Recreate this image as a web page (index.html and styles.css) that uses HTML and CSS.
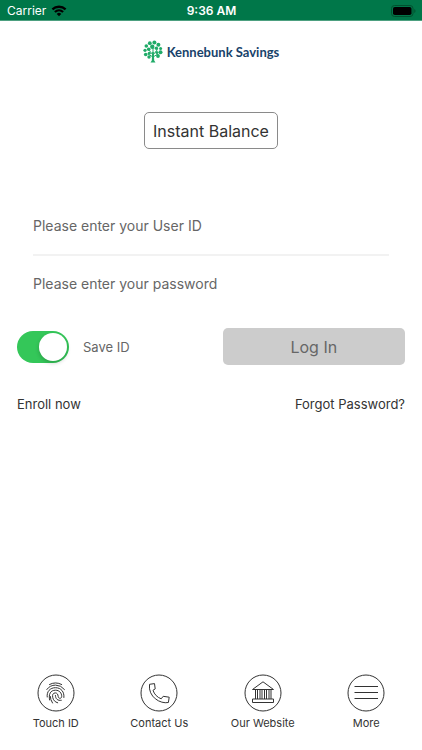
FILE: index.html
```html
<!DOCTYPE html>
<html lang="en">
<head>
<meta charset="utf-8">
<meta name="viewport" content="width=device-width, initial-scale=1">
<title>Kennebunk Savings</title>
<link rel="stylesheet" href="styles.css">
</head>
<body>
<header class="status">
  <div class="carrier">
    <span>Carrier</span>
    <svg class="wifi" viewBox="0 0 16 12" aria-hidden="true">
      <path d="M1.4 4.4a9.600 9.600 0 0 1 13.200 0M3.900 7a6 6 0 0 1 8.200 0" fill="none" stroke="#000" stroke-width="2.3"/>
      <path d="M5.700 8.900a3.400 3.400 0 0 1 4.600 0L8 11.300z"/>
    </svg>
  </div>
  <time class="clock">9:36 AM</time>
  <svg class="battery" viewBox="0 0 25 12" aria-hidden="true">
    <rect x=".5" y=".5" width="21.5" height="11" rx="3" fill="none" stroke="#00522f"/>
    <rect x="2" y="2" width="18.5" height="8" rx="1.8"/>
    <path d="M23.300 4v4q1.200-.6 1.200-2t-1.200-2z" fill="#00522f"/>
  </svg>
</header>

<main class="page">
  <h1 class="brand">
    <svg class="tree" viewBox="0 0 20 24" aria-hidden="true">
      <g fill="none" stroke="#20ab68" stroke-width="1">
        <path d="M10 16V7M10 15L5.500 9.500M10 15l4.500-5.500M10 17l-5-3M10 17l5-3"/>
      </g>
      <path d="M9.200 12h1.600l.4 8.500 1.300 2H7.500l1.300-2z" fill="#20ab68"/>
      <g fill="#20ab68">
        <circle cx="6.800" cy="3.200" r="1.900"/><circle cx="11.400" cy="2.500" r="2"/>
        <circle cx="15.400" cy="4.800" r="2"/><circle cx="3.300" cy="6" r="1.800"/>
        <circle cx="9.300" cy="6.700" r="2.200"/><circle cx="13.400" cy="8.300" r="1.700"/>
        <circle cx="17.600" cy="8.500" r="1.500"/><circle cx="5.700" cy="9.200" r="1.800"/>
        <circle cx="2" cy="10.300" r="1.600"/><circle cx="17.500" cy="12.300" r="2"/>
        <circle cx="13.900" cy="12.400" r="1.500"/><circle cx="2.700" cy="14.500" r="1.800"/>
        <circle cx="6.200" cy="13.200" r="1.500"/><circle cx="15" cy="16" r="1.900"/>
        <circle cx="6" cy="17" r="1.700"/>
      </g>
    </svg>
    <span>Kennebunk Savings</span>
  </h1>

  <button class="balance" type="button">Instant Balance</button>

  <form class="login">
    <div class="fields">
      <input class="field" type="text" placeholder="Please enter your User ID" aria-label="User ID">
      <input class="field" type="password" placeholder="Please enter your password" aria-label="Password">
    </div>
    <div class="row">
      <label class="save"><input class="switch" type="checkbox" role="switch" checked>Save ID</label>
      <button class="submit" type="submit" disabled>Log In</button>
    </div>
    <div class="row links">
      <a href="#enroll">Enroll now</a>
      <a href="#forgot">Forgot Password?</a>
    </div>
  </form>
</main>

<nav class="tabs">
  <a class="tab" href="#touch">
    <svg class="icon" viewBox="0 0 38 38" aria-hidden="true">
      <circle cx="19" cy="19" r="18"/>
      <g class="ridges">
        <path d="M12.500 10.500Q18.500 7.200 24.700 10.500"/>
        <path d="M9.800 15.500Q13 11.100 18.500 11.100T27.500 15.500"/>
        <path d="M10.200 23C9.400 17.500 13.200 13.700 18.500 13.700c5.600 0 9 4.200 8.400 9.800"/>
        <path d="M12.600 26C11.400 20 13.500 16.200 18.500 16.200c4 0 6.300 3 6.200 6.300-.1 2.400-3.300 2.400-3.500 0-.2-2.200-1.200-3.600-2.900-3.600-2.300 0-3.100 2-2.600 4.400.6 3 2.200 4.700 5 5.500"/>
        <path d="M15.500 29Q13.300 25.500 13.300 22.500M18.400 21.500c.2 3.600 2.300 5.400 5.900 4.800"/>
      </g>
    </svg>
    <span>Touch ID</span>
  </a>
  <a class="tab" href="#contact">
    <svg class="icon" viewBox="0 0 38 38" aria-hidden="true">
      <circle cx="19" cy="19" r="18"/>
      <path d="M9.500 10.300l5-.7.700 5.300-2.200 1.400c1.200 4 4.500 7.200 8.200 8.500l2-2.500 6 .9-.8 5.300c-8 1.700-20.500-5.500-18.900-18.200z"/>
    </svg>
    <span>Contact Us</span>
  </a>
  <a class="tab" href="#website">
    <svg class="icon" viewBox="0 0 38 38" aria-hidden="true">
      <circle cx="19" cy="19" r="18"/>
      <path d="M8.500 15.500L19 7.800l10.500 7.700zM11.500 15.500v9.500M13.500 15.500v9.500M16 15.500v9.500M18 15.500v9.500M20.500 15.500v9.500M22.500 15.500v9.500M25 15.500v9.500M27 15.500v9.500M8.500 25h21v3.500H8.500z"/>
    </svg>
    <span>Our Website</span>
  </a>
  <a class="tab" href="#more">
    <svg class="icon" viewBox="0 0 38 38" aria-hidden="true">
      <circle cx="19" cy="19" r="18"/>
      <path d="M7.500 12.500h23.500M7.500 18.500h23.500M7.500 24.500h23.500"/>
    </svg>
    <span>More</span>
  </a>
</nav>
</body>
</html>
```
FILE: styles.css
```css
* { box-sizing: border-box; }

body {
  margin: 0;
  min-height: 100vh;
  display: flex;
  flex-direction: column;
  background: #fff;
  color: #333;
  font: 14px/20px Inter, "Liberation Sans", sans-serif;
}

button, input { font: inherit; }
a { color: inherit; text-decoration: none; }

.status {
  display: grid;
  grid-template-columns: 1fr auto 1fr;
  align-items: center;
  height: 21px;
  padding: 1px 6px 0 7px;
  background: #007749;
  color: #fff;
  font-size: 12px;
  border-bottom: 1px solid #4da080;
}

.carrier { display: flex; align-items: center; gap: 5px; }
.wifi { width: 16px; height: 12px; }
.clock { font-weight: 600; }
.battery { width: 25px; height: 12px; justify-self: end; }

.page {
  flex: 1;
  display: flex;
  flex-direction: column;
  align-items: center;
  padding: 18px 17px 0;
}

.brand {
  display: flex;
  align-items: center;
  gap: 4px;
  margin: 0;
  color: #18426a;
  font-family: Lato, Inter, sans-serif;
  font-size: 13px;
  line-height: 26px;
  font-weight: 700;
}

.tree { width: 20px; height: 24px; }

.balance {
  height: 37px;
  margin-top: 47px;
  padding: 0 8px;
  background: #fff;
  border: 1px solid #8a8a8a;
  border-radius: 5px;
  color: #333;
  font-size: 16px;
}

.login { width: 100%; margin-top: 48px; }
.fields { padding: 0 16px; }

.field {
  display: block;
  width: 100%;
  height: 57px;
  padding: 0;
  border: 0;
  outline: 0;
  background: none;
  color: #333;
}

.field + .field { border-top: 2px solid #f2f2f2; }
.field::placeholder { color: #666; opacity: 1; }

.row {
  display: flex;
  align-items: center;
  justify-content: space-between;
  margin-top: 17px;
}

.save {
  display: flex;
  align-items: center;
  gap: 14px;
  color: #666;
  font-size: 13px;
}

.switch {
  appearance: none;
  display: flex;
  justify-content: flex-start;
  width: 52px;
  height: 32px;
  margin: 0;
  padding: 2px;
  border-radius: 16px;
  background: #ccc;
}

.switch::before {
  content: "";
  width: 28px;
  height: 28px;
  border-radius: 50%;
  background: #fff;
  box-shadow: 0 2px 4px rgba(0, 0, 0, .2);
}

.switch:checked { justify-content: flex-end; background: #34c759; }

.submit {
  width: 47%;
  height: 37px;
  padding: 0;
  border: 0;
  border-radius: 5px;
  background: #ccc;
  color: #666;
  font-size: 16px;
}

.links { margin-top: 29px; font-size: 13px; }

.tabs {
  display: grid;
  grid-template-columns: repeat(4, 1fr);
  padding: 0 4px 19px;
}

.tab {
  display: flex;
  flex-direction: column;
  align-items: center;
  gap: 3px;
  font-size: 11px;
  line-height: 16px;
}

.icon {
  width: 38px;
  height: 38px;
  fill: none;
  stroke: #333;
  stroke-width: 1;
}

.ridges { stroke-linecap: round; }
```
